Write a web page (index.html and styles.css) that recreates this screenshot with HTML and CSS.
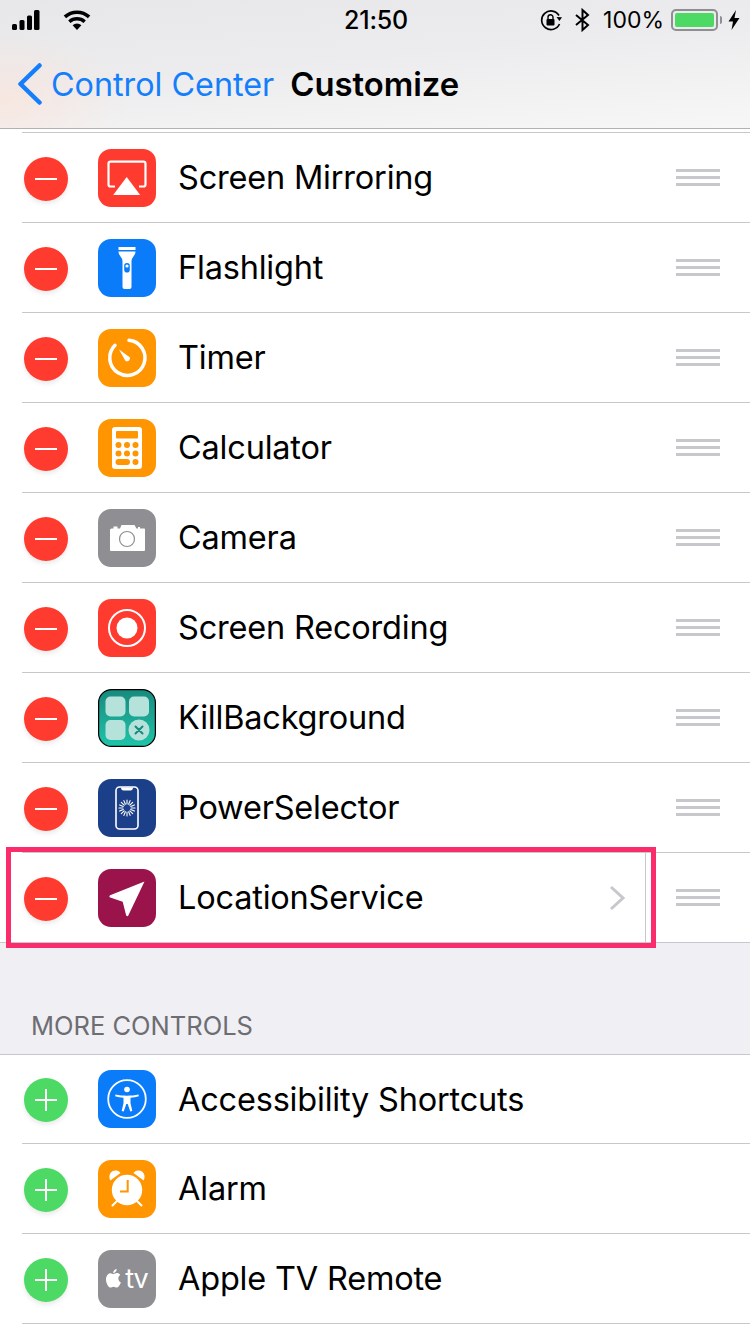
FILE: index.html
```html
<!DOCTYPE html>
<html lang="en">
<head>
  <meta charset="UTF-8">
  <title>Customize</title>
  <link rel="stylesheet" href="styles.css">
</head>
<body>

  <svg class="defs" width="0" height="0">
    <symbol id="grip" viewBox="0 0 44 17"><path d="M0 0h44v3H0zM0 7h44v3H0zM0 14h44v3H0z"/></symbol>
    <symbol id="minus" viewBox="0 0 44 44"><circle cx="22" cy="22" r="22" fill="#ff3b30"/><rect x="11" y="21" width="22" height="2" fill="#fff"/></symbol>
    <symbol id="plus" viewBox="0 0 44 44"><circle cx="22" cy="22" r="22" fill="#4cd964"/><path d="M11 21h10V11h2v10h10v2H23v10h-2V23H11z" fill="#fff"/></symbol>
  </svg>

  <header class="top">
    <div class="status">
      <div class="status-left">
        <svg width="34" height="20" viewBox="0 0 34 20"><rect x="0" y="14" width="5" height="6" rx="1.5"/><rect x="7.5" y="10" width="5" height="10" rx="1.5"/><rect x="15" y="5.5" width="5" height="14.5" rx="1.5"/><rect x="22" y="0" width="5.5" height="20" rx="1.5"/></svg>
        <svg class="wifi" width="28" height="20" viewBox="0 0 28 20"><path d="M14 20l-4.400-4.800a6.500 6.500 0 0 1 8.800 0z"/><path d="M7.500 12.900a9.800 9.800 0 0 1 13 0l2.300-2.500a13.300 13.300 0 0 0-17.600 0z"/><path d="M3.100 8.200a16 16 0 0 1 21.800 0L27.300 5.600a19.600 19.600 0 0 0-26.600 0z"/></svg>
      </div>
      <span class="clock">21:50</span>
      <div class="status-right">
        <svg width="23" height="22" viewBox="0 0 23 22" fill="none" stroke="#000"><path d="M19 6.500A9.300 9.300 0 1 0 19.500 15" stroke-width="1.700"/><path d="M16.500 8l5.500.2-2.600 3.800z" fill="#000" stroke="none"/><rect x="6.500" y="10" width="8" height="6.500" rx="1" fill="#000" stroke="none"/><path d="M8 10V8.300a2.500 2.500 0 0 1 5 0V10" stroke-width="1.400"/></svg>
        <svg class="bt" width="15" height="24" viewBox="0 0 15 22" fill="none" stroke="#000" stroke-width="2"><path d="M1 6l12 10-5.500 5V1L13 6 1 16"/></svg>
        <span class="pct">100%</span>
        <span class="battery"><span class="battery-fill"></span></span>
        <span class="battery-nub"></span>
        <svg class="bolt" width="12" height="20" viewBox="0 0 11 20"><path d="M7.500 0L0 11.500h4.500L3 20l8-12H6z"/></svg>
      </div>
    </div>
    <nav class="navbar">
      <svg class="back" width="26" height="42" viewBox="0 0 26 42" fill="none" stroke="#147efb" stroke-width="4.500" stroke-linecap="round" stroke-linejoin="round"><path d="M22.500 2.500L3.500 21l19 18.500"/></svg>
      <span class="back-label">Control Center</span>
      <span class="title">Customize</span>
    </nav>
  </header>

  <main>
    <ul class="list list-top">
      <li class="row">
        <svg class="action"><use href="#minus"/></svg>
        <svg class="app" viewBox="0 0 58 58"><rect width="58" height="58" rx="13" fill="#ff3b30"/><path d="M17 37.500h-4.500a2 2 0 0 1-2-2V14.700a2 2 0 0 1 2-2h33a2 2 0 0 1 2 2v20.800a2 2 0 0 1-2 2H41" fill="none" stroke="#fff" stroke-width="2.200"/><path d="M28.700 28l13.500 18h-27z" fill="#fff"/></svg>
        <span class="label">Screen Mirroring</span>
        <svg class="grip"><use href="#grip"/></svg>
      </li>
      <li class="row">
        <svg class="action"><use href="#minus"/></svg>
        <svg class="app" viewBox="0 0 58 58"><rect width="58" height="58" rx="13" fill="#0a7cfa"/><path d="M20.500 8h17v3h-17zM20.500 12.500h17c0 4-4 6-4 9.500v26a2 2 0 0 1-2 2h-5a2 2 0 0 1-2-2V22c0-3.500-4-5.500-4-9.500z" fill="#fff"/><rect x="26.200" y="24" width="5.600" height="9.500" rx="2.800" fill="#0a7cfa"/><circle cx="29" cy="27" r="1.600" fill="#fff"/></svg>
        <span class="label">Flashlight</span>
        <svg class="grip"><use href="#grip"/></svg>
      </li>
      <li class="row">
        <svg class="action"><use href="#minus"/></svg>
        <svg class="app" viewBox="0 0 58 58"><rect width="58" height="58" rx="13" fill="#ff9500"/><path d="M31 11.300a17.600 17.600 0 1 1-14 5" fill="none" stroke="#fff" stroke-width="3.500" stroke-linecap="round"/><path d="M21 20.500l11 8a3.200 3.200 0 0 1-4.500 3.500z" fill="#fff"/></svg>
        <span class="label">Timer</span>
        <svg class="grip"><use href="#grip"/></svg>
      </li>
      <li class="row">
        <svg class="action"><use href="#minus"/></svg>
        <svg class="app" viewBox="0 0 58 58"><rect width="58" height="58" rx="13" fill="#ff9500"/><rect x="14" y="8" width="30" height="42" rx="3" fill="#fff"/><rect x="18" y="12" width="22" height="7.500" rx="1" fill="#ff9500"/><g fill="#ff9500"><circle cx="20.500" cy="26" r="3"/><circle cx="29" cy="26" r="3"/><circle cx="37.500" cy="26" r="3"/><circle cx="20.500" cy="34.500" r="3"/><circle cx="29" cy="34.500" r="3"/><circle cx="37.500" cy="34.500" r="3"/><rect x="17.500" y="40" width="14.500" height="6" rx="3"/><circle cx="37.500" cy="43" r="3"/></g></svg>
        <span class="label">Calculator</span>
        <svg class="grip"><use href="#grip"/></svg>
      </li>
      <li class="row">
        <svg class="action"><use href="#minus"/></svg>
        <svg class="app" viewBox="0 0 58 58"><rect width="58" height="58" rx="13" fill="#8e8e93"/><path d="M13.500 19.500h2v-2h4v2h2.500l1.500-3.500h13l2 3.500h1.500v-1.500h2v1.500h4.500a1 1 0 0 1 .5 1V41a1 1 0 0 1-1 1H13a1 1 0 0 1-1-1V21a1.500 1.500 0 0 1 1.500-1.500z" fill="#fff"/><circle cx="29" cy="30" r="7.500" fill="none" stroke="#8e8e93" stroke-width="1.200"/></svg>
        <span class="label">Camera</span>
        <svg class="grip"><use href="#grip"/></svg>
      </li>
      <li class="row">
        <svg class="action"><use href="#minus"/></svg>
        <svg class="app" viewBox="0 0 58 58"><rect width="58" height="58" rx="13" fill="#ff3b30"/><circle cx="29" cy="29" r="18" fill="none" stroke="#fff" stroke-width="2"/><circle cx="29" cy="29" r="10.500" fill="#fff"/></svg>
        <span class="label">Screen Recording</span>
        <svg class="grip"><use href="#grip"/></svg>
      </li>
      <li class="row">
        <svg class="action"><use href="#minus"/></svg>
        <svg class="app" viewBox="0 0 58 58"><defs><linearGradient id="kill" x1="0" y1="0" x2="0" y2="1"><stop offset="0" stop-color="#178a7e"/><stop offset="1" stop-color="#1fc4a8"/></linearGradient></defs><rect x=".6" y=".6" width="56.800" height="56.800" rx="13" fill="url(#kill)" stroke="#000" stroke-width="1.200"/><g fill="#b5e2da"><rect x="7.500" y="7.500" width="20" height="20" rx="5"/><rect x="31" y="7.500" width="20" height="20" rx="5"/><rect x="7.500" y="31" width="20" height="20" rx="5"/><circle cx="41" cy="41" r="10.500"/></g><path d="M37.500 37.500l7 7M44.500 37.500l-7 7" stroke="#178a7e" stroke-width="2" stroke-linecap="round"/></svg>
        <span class="label">KillBackground</span>
        <svg class="grip"><use href="#grip"/></svg>
      </li>
      <li class="row">
        <svg class="action"><use href="#minus"/></svg>
        <svg class="app" viewBox="0 0 58 58"><rect width="58" height="58" rx="13" fill="#1c3f8a"/><rect x="18" y="8" width="22" height="42" rx="3.500" fill="none" stroke="#fff" stroke-width="1.600"/><path d="M23 8.500h12c0 2-1 3-2.500 3h-7C24 11.500 23 10.500 23 8.500z" fill="#fff"/><g stroke="#fff" stroke-width="1.100" stroke-linecap="round"><path d="M29 21v4M29 33v4M21 29h4M33 29h4M23.300 23.300l2.900 2.900M31.800 31.800l2.900 2.900M34.700 23.300l-2.900 2.900M26.200 31.800l-2.900 2.900M25.900 21.600l1.500 3.700M30.600 32.700l1.500 3.700M32.100 21.600l-1.500 3.700M27.400 32.700l-1.500 3.700M21.600 25.900l3.700 1.500M32.700 30.600l3.700 1.500M36.400 25.900l-3.700 1.500M25.300 30.600l-3.700 1.500"/></g></svg>
        <span class="label">PowerSelector</span>
        <svg class="grip"><use href="#grip"/></svg>
      </li>
      <li class="row row-detail">
        <svg class="action"><use href="#minus"/></svg>
        <svg class="app" viewBox="0 0 58 58"><rect width="58" height="58" rx="13" fill="#9b134b"/><path d="M46.500 12.500L30.300 46.500a1.200 1.200 0 0 1-2.200-.2L24.700 32.700 12.200 28.500a1.200 1.200 0 0 1-.1-2.200z" fill="#fff"/></svg>
        <span class="label">LocationService</span>
        <div class="detail">
          <svg class="chevron" width="17" height="26" viewBox="0 0 17 26" fill="none" stroke="#c7c7cc" stroke-width="3"><path d="M2 2l12 11L2 24"/></svg>
        </div>
        <svg class="grip"><use href="#grip"/></svg>
        <div class="highlight"></div>
      </li>
    </ul>

    <h2 class="section">MORE CONTROLS</h2>

    <ul class="list list-more">
      <li class="row">
        <svg class="action"><use href="#plus"/></svg>
        <svg class="app" viewBox="0 0 58 58"><rect width="58" height="58" rx="13" fill="#0a7cfa"/><circle cx="29" cy="29" r="18.800" fill="none" stroke="#fff" stroke-width="1.800"/><circle cx="29" cy="19.500" r="2.800" fill="#fff"/><path d="M17.500 24.500c3.500.8 7.500 1.200 11.500 1.200s8-.4 11.500-1.200l.4 1.700c-2.500.8-5.500 1.300-8.400 1.600V33l1.800 8-2 .5-2.600-7.500h-1.400l-2.600 7.500-2-.5 1.800-8v-5.200c-2.900-.3-5.900-.8-8.400-1.600z" fill="#fff"/></svg>
        <span class="label">Accessibility Shortcuts</span>
      </li>
      <li class="row">
        <svg class="action"><use href="#plus"/></svg>
        <svg class="app" viewBox="0 0 58 58"><rect width="58" height="58" rx="13" fill="#ff9500"/><circle cx="29" cy="30" r="15.200" fill="#fff"/><path d="M12.300 20.500C9.500 15 13.500 10 18 10.500c2 .2 3.500 1.200 4.500 2.500zM45.700 20.500C48.500 15 44.500 10 40 10.500c-2 .2-3.500 1.200-4.500 2.500z" fill="#fff"/><path d="M19 41l-4.500 4.500M39 41l4.500 4.500" stroke="#fff" stroke-width="2" stroke-linecap="round"/><path d="M29.700 20v11.500H22" fill="none" stroke="#ff9500" stroke-width="2"/></svg>
        <span class="label">Alarm</span>
      </li>
      <li class="row">
        <svg class="action"><use href="#plus"/></svg>
        <div class="app app-tv">
          <svg width="15" height="19" viewBox="0 0 20 23" preserveAspectRatio="none"><path d="M14.200 0c.2 2.600-2.200 5-4.600 4.800C9.300 2.400 11.800.2 14.200 0zM10 6c1.200 0 2.500-1.100 4.600-1.100 1.500 0 3.200.7 4.400 2.300-3.800 2.100-3.200 7.500.9 9.100-1.300 3-3.500 6.200-5.600 6.200-1.600 0-2.300-1-4.200-1-1.900 0-2.600 1-4.100 1C3 22.500 0 16.800 0 12.700 0 8 3 5 6 5c1.700 0 3 1 4 1z" fill="#fff"/></svg>
          <span class="tv">tv</span>
        </div>
        <span class="label">Apple TV Remote</span>
      </li>
    </ul>
  </main>

</body>
</html>
```

FILE: styles.css
```css
* {
  box-sizing: border-box;
}
html, body {
  margin: 0;
  padding: 0;
}
body {
  width: 750px;
  height: 1334px;
  overflow: hidden;
  background: #fff;
  font-family: Inter, "Liberation Sans", sans-serif;
  color: #000;
}
.defs {
  display: block;
  height: 0;
}

/* barra superior */
.top {
  height: 129px;
  border-bottom: 1px solid #b2b2b2;
  background:
    radial-gradient(ellipse 130px 70px at 0 100px, rgba(255, 225, 212, .55), rgba(255, 225, 212, 0)),
    linear-gradient(175deg, #e7e7e9 0%, #ececee 45%, #f7f7f7 100%);
}
.status {
  height: 40px;
  padding: 0 10px 0 12px;
  display: grid;
  grid-template-columns: 1fr auto 1fr;
  align-items: center;
}
.status-left {
  display: flex;
  align-items: center;
  gap: 17px;
}
.clock {
  font-size: 25px;
  font-weight: 500;
  letter-spacing: -.2px;
}
.status-right {
  display: flex;
  align-items: center;
  justify-content: flex-end;
}
.bt {
  margin-left: 12px;
}
.pct {
  font-size: 23px;
  margin-left: 13px;
}
.battery {
  width: 47px;
  height: 22px;
  margin-left: 7px;
  padding: 2px;
  border: 2px solid #8e8e93;
  border-radius: 5px;
  display: block;
}
.battery-fill {
  display: block;
  height: 100%;
  background: #4cd964;
  border-radius: 2px;
}
.battery-nub {
  width: 2px;
  height: 8px;
  margin-left: 2px;
  background: #8e8e93;
  border-radius: 0 2px 2px 0;
}
.bolt {
  margin-left: 6px;
}
.navbar {
  height: 88px;
  display: flex;
  align-items: center;
  padding-left: 17px;
}
.back-label {
  font-size: 32.3px;
  color: #147efb;
  margin-left: 8px;
}
.title {
  font-size: 32.8px;
  font-weight: 600;
  margin-left: 16px;
}

/* listas */
.list {
  list-style: none;
  margin: 0;
  padding: 0;
  background: #fff;
}
.list-top {
  padding-top: 3px;
}
.list-top .row:first-child {
  border-top: 1px solid #c8c7cc;
  height: 91px;
}
.list-more {
  border-top: 1px solid #c8c7cc;
}
.row {
  height: 90px;
  display: flex;
  align-items: center;
  position: relative;
  margin-left: 22px;
  padding-left: 2px;
  padding-right: 30px;
  border-bottom: 1px solid #c8c7cc;
}
.list-top .row:last-child {
  margin-left: 0;
  padding-left: 24px;
}
.list-more .row:first-child {
  height: 89px;
}
.action {
  width: 44px;
  height: 44px;
  flex: none;
  margin-top: 2px;
  overflow: visible;
  filter: drop-shadow(0 3px 2px rgba(0, 0, 0, .08));
}
.app {
  width: 58px;
  height: 58px;
  flex: none;
  margin-left: 30px;
}
.app-tv {
  border-radius: 13px;
  background: #8e8e93;
  display: flex;
  align-items: center;
  justify-content: center;
  gap: 4px;
}
.tv {
  color: #fff;
  font-size: 27px;
  letter-spacing: -1px;
  line-height: 1;
}
.label {
  font-size: 32.5px;
  letter-spacing: -.2px;
  margin-left: 22px;
  flex: 1;
  white-space: nowrap;
}
.grip {
  width: 44px;
  height: 17px;
  flex: none;
  fill: #c7c7cc;
}
.detail {
  width: 37px;
  height: 89px;
  margin-right: 30px;
  border-right: 1px solid #c8c7cc;
  display: flex;
  align-items: center;
}
.highlight {
  position: absolute;
  left: 6px;
  top: -6px;
  width: 650px;
  height: 101px;
  border: 5px solid #fb2c6b;
  pointer-events: none;
}

.section {
  height: 111px;
  margin: 0;
  padding: 68px 0 0 31px;
  background: #efeff4;
  color: #6d6d72;
  font-size: 25.5px;
  font-weight: 400;
  line-height: 30px;
}
```
